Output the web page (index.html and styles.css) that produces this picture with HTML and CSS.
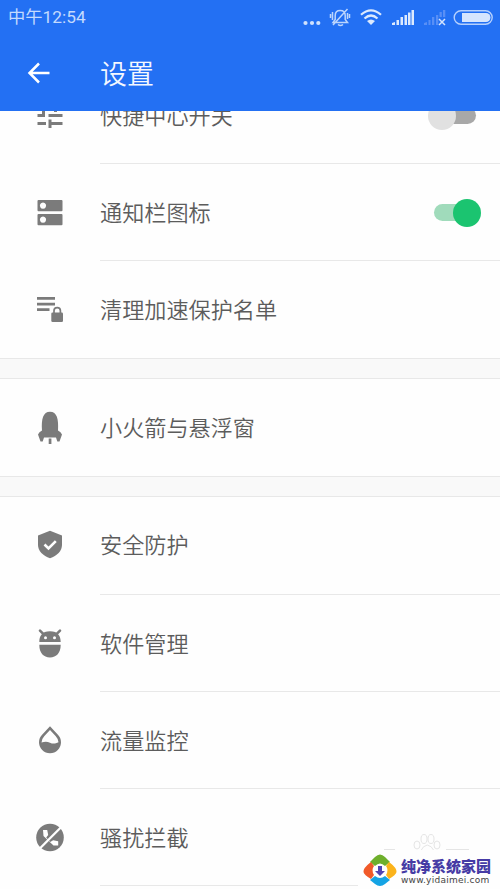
FILE: index.html
```html
<!DOCTYPE html>
<html lang="zh-CN">
<head>
<meta charset="utf-8">
<title>设置</title>
<link rel="stylesheet" href="styles.css">
</head>
<body>
<div class="screen">
  <header class="header">
    <div class="status">
      <span class="clock">中午12:54</span>
      <svg class="indicators" width="200" height="36" viewBox="300 0 200 36">
        <g fill="#cfe1fd"><circle cx="305.500" cy="23" r="2.100"/><circle cx="312" cy="23" r="2.100"/><circle cx="318.300" cy="23" r="2.100"/></g>
        <g fill="none" stroke="#bcd5fc" stroke-width="1.500">
          <path d="M333 22.500h14.500l-2.300-3v-4c0-3-2-5-5-5s-5 2-5 5v4zM338 24.500q2.500 2 5 0M333 25L347.500 9M332.500 12v8M330.500 14v4M347.500 13v6M349.500 14v4"/>
        </g>
        <g fill="none" stroke="#dceafe" stroke-width="2.200"><path d="M361 14.800q10-9 20 0M364.500 18.500q6.500-6 13 0"/></g>
        <path d="M367 21q4-3 8 0l-4 4z" fill="#dceafe"/>
        <path d="M392 25v-2l3-1v3zM396.500 25v-5h2.500v5zM400.500 25v-8h2.500v8zM404.500 25v-10h2.500v10zM408 25v-12.500h2.500v12.500zM411.500 25v-15h2.500v15z" fill="#dceafe"/>
        <path d="M424 25v-2l3-1v3zM428.500 25v-5h2v5zM432 25v-8h2.300v8zM436 25v-10h2.300v10zM439.500 17v-5h2.300v5zM443 17v-7h2.300v7z" fill="#588ff6"/>
        <path d="M439 19l6 6M445 19l-6 6" stroke="#d4e4fe" stroke-width="1.500"/>
        <rect x="454.200" y="10.700" width="38" height="13.600" rx="6.800" fill="none" stroke="#b5d0fd" stroke-width="1.400"/>
        <path d="M462 13h24a4.500 4.500 0 0 1 0 9h-24z" fill="#d5e5fe"/>
      </svg>
    </div>
    <div class="toolbar">
      <svg class="back" width="24" height="24" viewBox="0 0 24 24"><path d="M22.500 12H3M12 2.500L2.500 12l9.500 9.500" fill="none" stroke="#fff" stroke-width="2.500"/></svg>
      <h1 class="title">设置</h1>
    </div>
  </header>

  <main class="list">
    <section class="group">
      <div class="row">
        <svg class="icon" viewBox="0 0 32 34"><path d="M3.500 7h14v3h-14zM20 4h3v3h5.500v3H23v3h-3zM3.500 15H8v-3h3v6H3.500zM14.500 15h14v3h-14zM3.500 23h8.500v3H3.500zM14.500 20.500h3V23h11v3h-11v3h-3z"/></svg>
        <span class="label">快捷中心开关</span>
        <span class="switch"><i class="knob"></i></span>
      </div>
      <div class="row">
        <svg class="icon" viewBox="0 0 32 32"><path fill-rule="evenodd" d="M4.500 3h23q1 0 1 1v9.300q0 1-1 1h-23q-1 0-1-1V4q0-1 1-1zM9 5.500a3.100 3.100 0 1 0 .01 0zM4.500 17h23q1 0 1 1v9.300q0 1-1 1h-23q-1 0-1-1V18q0-1 1-1zM9 19.500a3.100 3.100 0 1 0 .01 0z"/></svg>
        <span class="label">通知栏图标</span>
        <span class="switch on"><i class="knob"></i></span>
      </div>
      <div class="row">
        <svg class="icon" viewBox="0 0 32 32"><path d="M3 3h18v2.800H3zM3 8.700h18v2.800H3zM3 14.300h12.500v2.800H3z"/><rect x="17.300" y="18.500" width="11.700" height="9.500" rx="1.300"/><path d="M20 19v-2.200a3.200 3.200 0 0 1 6.400 0V19" fill="none" stroke="#7b7b7b" stroke-width="1.700"/></svg>
        <span class="label">清理加速保护名单</span>
      </div>
    </section>
    <section class="group">
      <div class="row">
        <svg class="icon" viewBox="0 0 32 34"><path d="M8 19.500C7.300 8 9 .8 16 .8S24.700 8 24 19.500q3 1.500 4 4l-2.500 7h-2.200l-1.300-4H10l-1.300 4H6.500L4 23.500q1-2.500 4-4zM14.700 27.500h2.700V33h-2.700z"/></svg>
        <span class="label">小火箭与悬浮窗</span>
      </div>
    </section>
    <section class="group last">
      <div class="row">
        <svg class="icon" viewBox="0 0 32 32"><path d="M16 1.700l12 4.700v9.400c0 6.500-5 11-12 13.500-7-2.500-12-7-12-13.500V6.400z"/><path d="M10.500 15.500l4 4 7.300-7.300" fill="none" stroke="#fff" stroke-width="2.600"/></svg>
        <span class="label">安全防护</span>
      </div>
      <div class="row">
        <svg class="icon" viewBox="0 0 32 32"><path d="M5.300 14C5.300 8 8 3.200 16 3.200S26.700 8 26.700 14zM5.300 16.800h21.400C26.700 25 22.500 29.500 16 29.500S5.300 25 5.300 16.800z"/><path d="M6 2.700l4 4M26 2.700l-4 4" stroke="#7b7b7b" stroke-width="2.600" stroke-linecap="round"/><circle cx="11.500" cy="9.700" r="1.500" fill="#fff"/><circle cx="20.500" cy="9.700" r="1.500" fill="#fff"/></svg>
        <span class="label">软件管理</span>
      </div>
      <div class="row">
        <svg class="icon" viewBox="0 0 32 32"><path fill-rule="evenodd" d="M16 1.200l7.700 8.300a11 11 0 1 1-15.400 0zM16 5l-5.800 6.300q-2.700 2.900-2.700 6.200c3-1 5.500-1.300 8.500.2s5.500 1 8.500-.5q-.3-3.300-2.700-5.900z"/></svg>
        <span class="label">流量监控</span>
      </div>
      <div class="row">
        <svg class="icon" viewBox="0 0 32 32"><circle cx="16" cy="15.500" r="13.800"/><path d="M9 8h4.200l1 5-2 2.500 4 4.500 3-1.700 5 1v4.200h-4.700L9.500 14z" fill="#fff"/><path d="M5.800 26.500L27.500 4.800" stroke="#fff" stroke-width="2.300"/></svg>
        <span class="label">骚扰拦截</span>
      </div>
    </section>
  </main>

  <svg class="paw" width="90" height="22" viewBox="0 0 90 22"><g fill="none" stroke="#e5e5e5"><ellipse cx="37" cy="13" rx="3" ry="4"/><ellipse cx="44" cy="7" rx="3" ry="4.500"/><ellipse cx="51" cy="7" rx="3" ry="4.500"/><ellipse cx="57" cy="13" rx="3" ry="4"/><path d="M40 20q7-14 15 0M4 17.500h11M66 17.500h23"/></g></svg>
  <div class="mark">
    <svg width="34" height="34" viewBox="0 0 34 34">
      <path d="M7 9Q8 8 12 4q5-5 10 0l5 5-5 4q-5-5-10 0z" fill="#6eaf2c"/>
      <path d="M8 9q-8 6-7.500 10Q1 22 8 26l3-4q-3-5 0-9z" fill="#f15a29"/>
      <path d="M26 9q8 6 7.500 10Q33 22 26 26l-3-4q3-5 0-9z" fill="#fbb31b"/>
      <path d="M7 27l5-4q5 4 10 0l5 4-5 4q-5 4-10 0z" fill="#14a3e4"/>
      <path d="M15 13h4v5h3l-5 5-5-5h3z" fill="#5044b4"/>
    </svg>
    <div class="marktext"><b>纯净系统家园</b><span>www.yidaimei.com</span></div>
  </div>
</div>
</body>
</html>
```
FILE: styles.css
```css
* { box-sizing: border-box; }
body { margin: 0; background: #fefefe; font-family: "Noto Sans CJK SC", sans-serif; }
.screen { position: relative; width: 500px; height: 889px; overflow: hidden; display: flex; flex-direction: column; }
.header { flex: none; height: 111px; background: #2370f3; z-index: 1; }
.status { height: 36px; display: flex; justify-content: space-between; }
.clock { padding-left: 8px; font: 17.300px/35px Roboto, "Noto Sans CJK SC", sans-serif; color: #c4dafd; white-space: nowrap; }
.indicators { flex: none; }
.toolbar { height: 74px; display: flex; align-items: center; }
.back { margin: 0 49px 0 27px; }
.title { margin: 0; padding-bottom: 1px; font-size: 27px; line-height: 40px; font-weight: 350; color: #f4f8ff; }
.list { flex: none; margin-top: -44px; background: #f9f9f9; }
.group { margin-bottom: 19px; border-bottom: 1px solid #e8e8e8; background: #fefefe; }
.group + .group { border-top: 1px solid #e8e8e8; }
.row { height: 97px; display: flex; align-items: center; padding: 0 19px 0 34px; }
.icon { flex: none; width: 32px; height: 34px; fill: #7b7b7b; margin-right: 34px; }
.label { flex: 1; padding-bottom: 4px; font-size: 22.150px; line-height: 32px; font-weight: 350; color: #5c5c5c; white-space: nowrap; }
.row:not(:last-child), .last .row:last-child { background: linear-gradient(#e8e8e8, #e8e8e8) 100px 100% / 400px 1px no-repeat; }
.group.last { margin-bottom: 0; border-bottom: 0; }
.group.last .row:first-child { height: 98px; padding-bottom: 2px; }
.switch { display: flex; align-items: center; width: 43px; height: 17px; margin-right: 5px; border-radius: 9px; background: #a8a8a8; }
.knob { width: 28px; height: 28px; margin-left: -5px; border-radius: 50%; background: #e1e1e1; flex: none; }
.switch.on { width: 42px; background: #a0dbbb; }
.on .knob { margin-left: 19px; background: #1bc470; }
.paw { position: absolute; left: 380px; top: 832px; }
.mark { position: absolute; left: 358px; top: 850px; width: 142px; height: 39px; padding: 3px 0 0 5px; background: #fefefe; display: flex; gap: 4px; }
.mark svg { flex: none; }
.marktext { display: flex; flex-direction: column; color: #463ba5; padding-top: 5px; }
.marktext b { font-size: 15px; line-height: 16px; font-weight: 900; white-space: nowrap; }
.marktext span { font: 9px/12px "DejaVu Sans", sans-serif; letter-spacing: .25px; color: #444; white-space: nowrap; }
```
